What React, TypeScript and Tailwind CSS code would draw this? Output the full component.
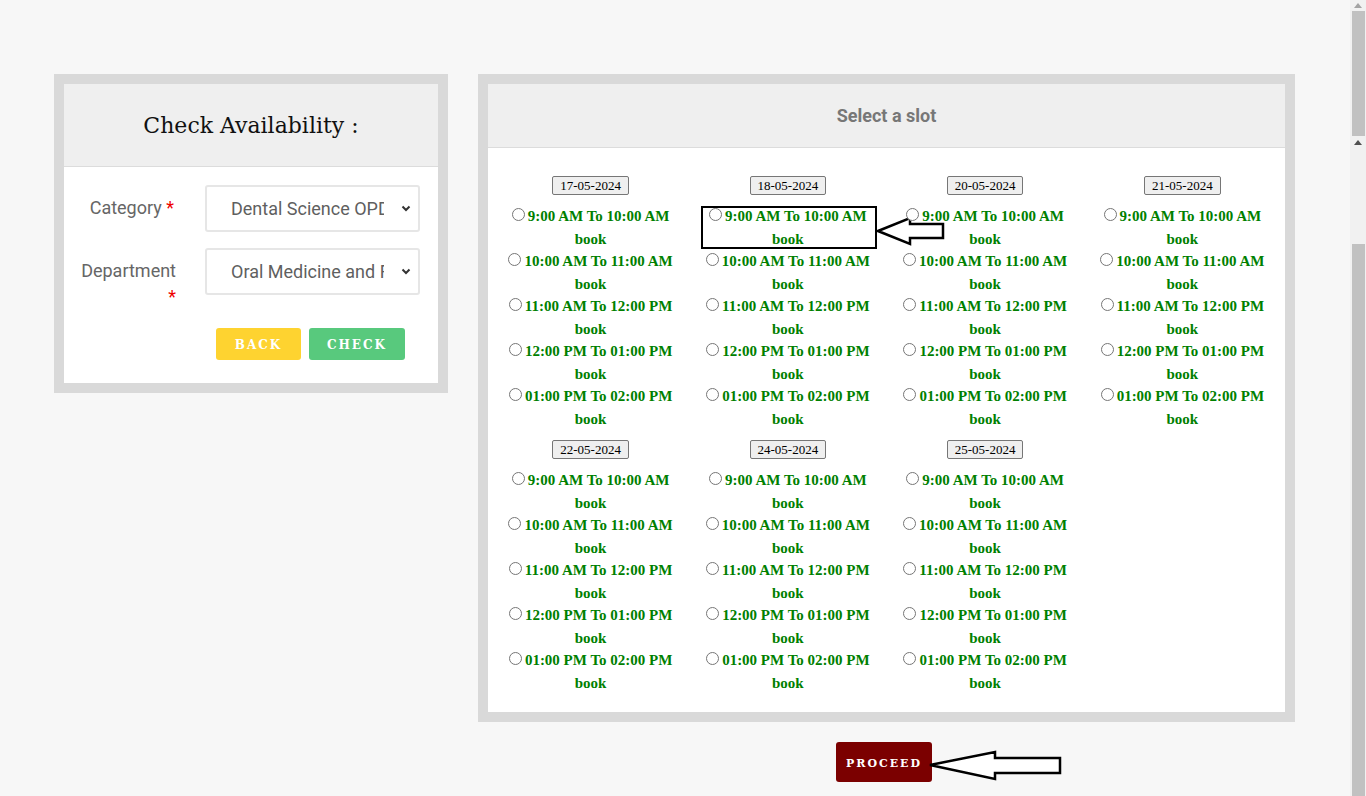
import React from 'react';

const DATES = ['17-05-2024', '18-05-2024', '20-05-2024', '21-05-2024', '22-05-2024', '24-05-2024', '25-05-2024'];

const SLOTS = [
  '9:00 AM To 10:00 AM',
  '10:00 AM To 11:00 AM',
  '11:00 AM To 12:00 PM',
  '12:00 PM To 01:00 PM',
  '01:00 PM To 02:00 PM',
];

const slab = { fontFamily: '"DejaVu Serif", serif' };
const roboto = { fontFamily: 'Roboto, "Liberation Sans", sans-serif' };
const times = { fontFamily: '"Liberation Serif", "Times New Roman", serif' };

// fake dropdown so the clipping of the value matches the screenshot
const FakeSelect = ({ value }: { value: string }) => (
  <div className="relative h-[47px] w-[215px] rounded-[3px] border-2 border-[#e6e6e6] bg-white">
    <div className="ml-[24px] w-[153px] overflow-hidden whitespace-nowrap text-[18px] leading-[43px] text-[#5f5f5f]" style={roboto}>
      {value}
    </div>
    <svg className="absolute right-[7px] top-[18px]" width="10" height="7" viewBox="0 0 10 7">
      <path d="M1.5 1.5 L5 5 L8.5 1.5" fill="none" stroke="#333" strokeWidth="2" />
    </svg>
  </div>
);

const AvailabilityCard = () => (
  <div className="w-[394px] bg-[#d9d9d9] p-[10px]">
    <div className="flex h-[83px] items-center justify-center border-b border-[#dcdcdc] bg-[#efefef]">
      <h2 className="text-[22px] text-[#111]" style={slab}>Check Availability :</h2>
    </div>
    <div className="bg-white pt-[18px] pb-[23px]">
      <div className="flex items-start">
        <label className="w-[110px] pt-[10px] text-right text-[18px] leading-[26px] text-[#666]" style={roboto}>
          Category <span className="text-[#e00]">*</span>
        </label>
        <div className="ml-[31px]">
          <FakeSelect value="Dental Science OPD" />
        </div>
      </div>
      <div className="mt-[16px] flex items-start">
        <label className="ml-[12px] w-[100px] pt-[10px] text-right text-[18px] leading-[26px] text-[#666]" style={roboto}>
          Department <span className="text-[#e00]">*</span>
        </label>
        <div className="ml-[29px]">
          <FakeSelect value="Oral Medicine and Radiology" />
        </div>
      </div>
      <div className="mt-[18px] flex gap-[8px] pl-[152px]">
        <button className="h-[32px] w-[85px] rounded-[3px] bg-[#fed330] pt-[1px] text-[12px] font-bold tracking-[2px] text-white" style={slab}>
          BACK
        </button>
        <button className="h-[32px] w-[96px] rounded-[3px] bg-[#58c97d] pt-[1px] text-[12px] font-bold tracking-[2px] text-white" style={slab}>
          CHECK
        </button>
      </div>
    </div>
  </div>
);

const Slot = ({ label, highlighted }: { label: string; highlighted?: boolean }) => (
  <div className="relative h-[45px] text-center text-[15px] font-bold leading-[22.5px] text-[#008000]" style={times}>
    <input type="radio" name="slot" />
    <span className="ml-[3px]">{label}</span>
    <br />
    book
    {highlighted && (
      <>
        <span className="pointer-events-none absolute left-[12px] top-[1px] h-[43px] w-[176px] border-2 border-black" />
        <svg className="pointer-events-none absolute left-[186px] top-[10px]" width="72" height="34" viewBox="0 0 72 34">
          <polygon points="3,16 35,3 35,9 68,9 68,23 35,23 35,29" fill="white" stroke="black" strokeWidth="2.5" />
        </svg>
      </>
    )}
  </div>
);

const DateColumn = ({ date, highlightFirst }: { date: string; highlightFirst?: boolean }) => (
  <div className="flex flex-col">
    <div className="mb-[10px] flex justify-center">
      <span className="h-[19px] rounded-[2px] border border-[#767676] bg-[#efefef] px-[7px] text-[13px] leading-[17px] text-black" style={times}>
        {date}
      </span>
    </div>
    {SLOTS.map((s, i) => (
      <Slot key={s} label={s} highlighted={highlightFirst && i === 0} />
    ))}
  </div>
);

const SlotCard = () => (
  <div className="w-[817px] bg-[#d9d9d9] p-[10px]">
    <div className="flex h-[64px] items-center justify-center border-b border-[#dcdcdc] bg-[#efefef]">
      <h3 className="text-[18px] font-bold text-[#777]" style={roboto}>Select a slot</h3>
    </div>
    <div className="grid grid-cols-4 gap-y-[10px] bg-white px-[4px] pt-[28px] pb-[18px]">
      {DATES.map((d, i) => (
        <DateColumn key={d} date={d} highlightFirst={i === 1} />
      ))}
    </div>
  </div>
);

const Scrollbar = () => (
  <div className="flex h-[796px] w-[16px] flex-col items-center bg-[#f1f1f1]">
    <svg className="mt-[3px]" width="8" height="5" viewBox="0 0 8 5">
      <polygon points="0,5 4,0 8,5" fill="#a3a3a3" />
    </svg>
    <div className="mt-[3px] h-[125px] w-[13px] bg-[#c1c1c1]" />
    <svg className="mt-[4px]" width="8" height="5" viewBox="0 0 8 5">
      <polygon points="0,5 4,0 8,5" fill="#505050" />
    </svg>
    <div className="mt-[99px] w-[13px] flex-1 bg-[#c1c1c1]" />
  </div>
);

export default function App() {
  return (
    <div className="flex h-[796px] overflow-hidden bg-[#f7f7f7]">
      <main className="flex flex-1 items-start gap-[30px] pl-[54px] pt-[74px]">
        <AvailabilityCard />
        <div className="flex w-[817px] flex-col items-center">
          <SlotCard />
          <div className="relative mr-[5px] mt-[20px]">
            <button className="h-[40px] w-[96px] rounded-[3px] bg-[#7b0000] pt-[4px] text-[11px] font-bold tracking-[2px] text-white" style={slab}>
              PROCEED
            </button>
            <svg className="pointer-events-none absolute left-[92px] top-[6px]" width="136" height="36" viewBox="0 0 136 36">
              <polygon points="2,17 67,4 67,10 132,10 132,25 67,25 67,31" fill="white" stroke="black" strokeWidth="2.5" />
            </svg>
          </div>
        </div>
      </main>
      <Scrollbar />
    </div>
  );
}
